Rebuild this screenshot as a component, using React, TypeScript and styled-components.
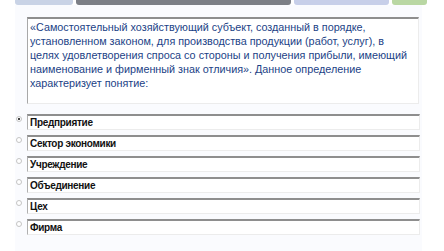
import React from "react";
import styled, { createGlobalStyle } from "styled-components";

const Global = createGlobalStyle`
  html, body { margin: 0; padding: 0; background: #ffffff; }
  body { font-family: "Liberation Sans", Arial, sans-serif; overflow: hidden; }
`;

const Page = styled.div`
  width: 444px;
  height: 251px;
  display: flex;
  flex-direction: column;
  background: #ffffff;
`;

const TopBar = styled.div`
  height: 5px;
  display: flex;
  padding-left: 15px;
  gap: 3px;
`;

const Tab = styled.div<{ $w: number; $bg: string }>`
  width: ${(p) => p.$w}px;
  height: 100%;
  background: ${(p) => p.$bg};
  border-radius: 0 0 3px 3px;
`;

const Body = styled.div`
  flex: 1;
  margin: 0 22px 0 15px;
  background: #fafbfe;
  padding: 12px 0 0 12px;
  display: flex;
  flex-direction: column;
`;

const Question = styled.div`
  width: 392px;
  height: 87px;
  box-sizing: border-box;
  border-top: 2px solid #8e8e8e;
  border-left: 1px solid #a8a8a8;
  border-right: 1px solid #ececec;
  border-bottom: 1px solid #ececec;
  background: #ffffff;
  padding: 1px 3px 0 2px;
  color: #1b3f86;
  font-size: 10.8px;
  line-height: 14px;
  white-space: nowrap;
`;

const Answers = styled.div`
  margin-top: 10px;
  margin-left: -12px;
  display: flex;
  flex-direction: column;
  gap: 5px;
`;

const Row = styled.label`
  display: flex;
  align-items: flex-start;
`;

const Radio = styled.span<{ $on?: boolean }>`
  width: 6px;
  height: 6px;
  margin: 2px 0 0 1px;
  box-sizing: border-box;
  border-radius: 50%;
  border: 1px solid #c4c4c4;
  background: ${(p) => (p.$on ? "radial-gradient(circle, #444 40%, #fff 55%)" : "#fff")};
  flex: none;
`;

const Box = styled.div`
  margin-left: 5px;
  width: 393px;
  height: 16px;
  box-sizing: border-box;
  border-top: 2px solid #8e8e8e;
  border-left: 1px solid #b0b0b0;
  border-right: 1px solid #ececec;
  border-bottom: 1px solid #ececec;
  background: #ffffff;
  padding: 1px 3px 0 2px;
  font-size: 10px;
  font-weight: bold;
  letter-spacing: -0.3px;
  color: #111;
  line-height: 12px;
`;

const answers = ["Предприятие", "Сектор экономики", "Учреждение", "Объединение", "Цех", "Фирма"];

export default function App() {
  return (
    <Page>
      <Global />
      <TopBar>
        <Tab $w={58} $bg="#c9d3e6" />
        <Tab $w={215} $bg="#7c7f86" />
        <Tab $w={95} $bg="#c7cfe9" />
        <Tab $w={35} $bg="#b9d7a3" />
      </TopBar>
      <Body>
        <Question>
          «Самостоятельный хозяйствующий субъект, созданный в порядке,
          <br />
          установленном законом, для производства продукции (работ, услуг), в
          <br />
          целях удовлетворения спроса со стороны и получения прибыли, имеющий
          <br />
          наименование и фирменный знак отличия». Данное определение
          <br />
          характеризует понятие:
        </Question>
        <Answers>
          {answers.map((a, i) => (
            <Row key={a}>
              <Radio $on={i === 0} />
              <Box>{a}</Box>
            </Row>
          ))}
        </Answers>
      </Body>
    </Page>
  );
}
